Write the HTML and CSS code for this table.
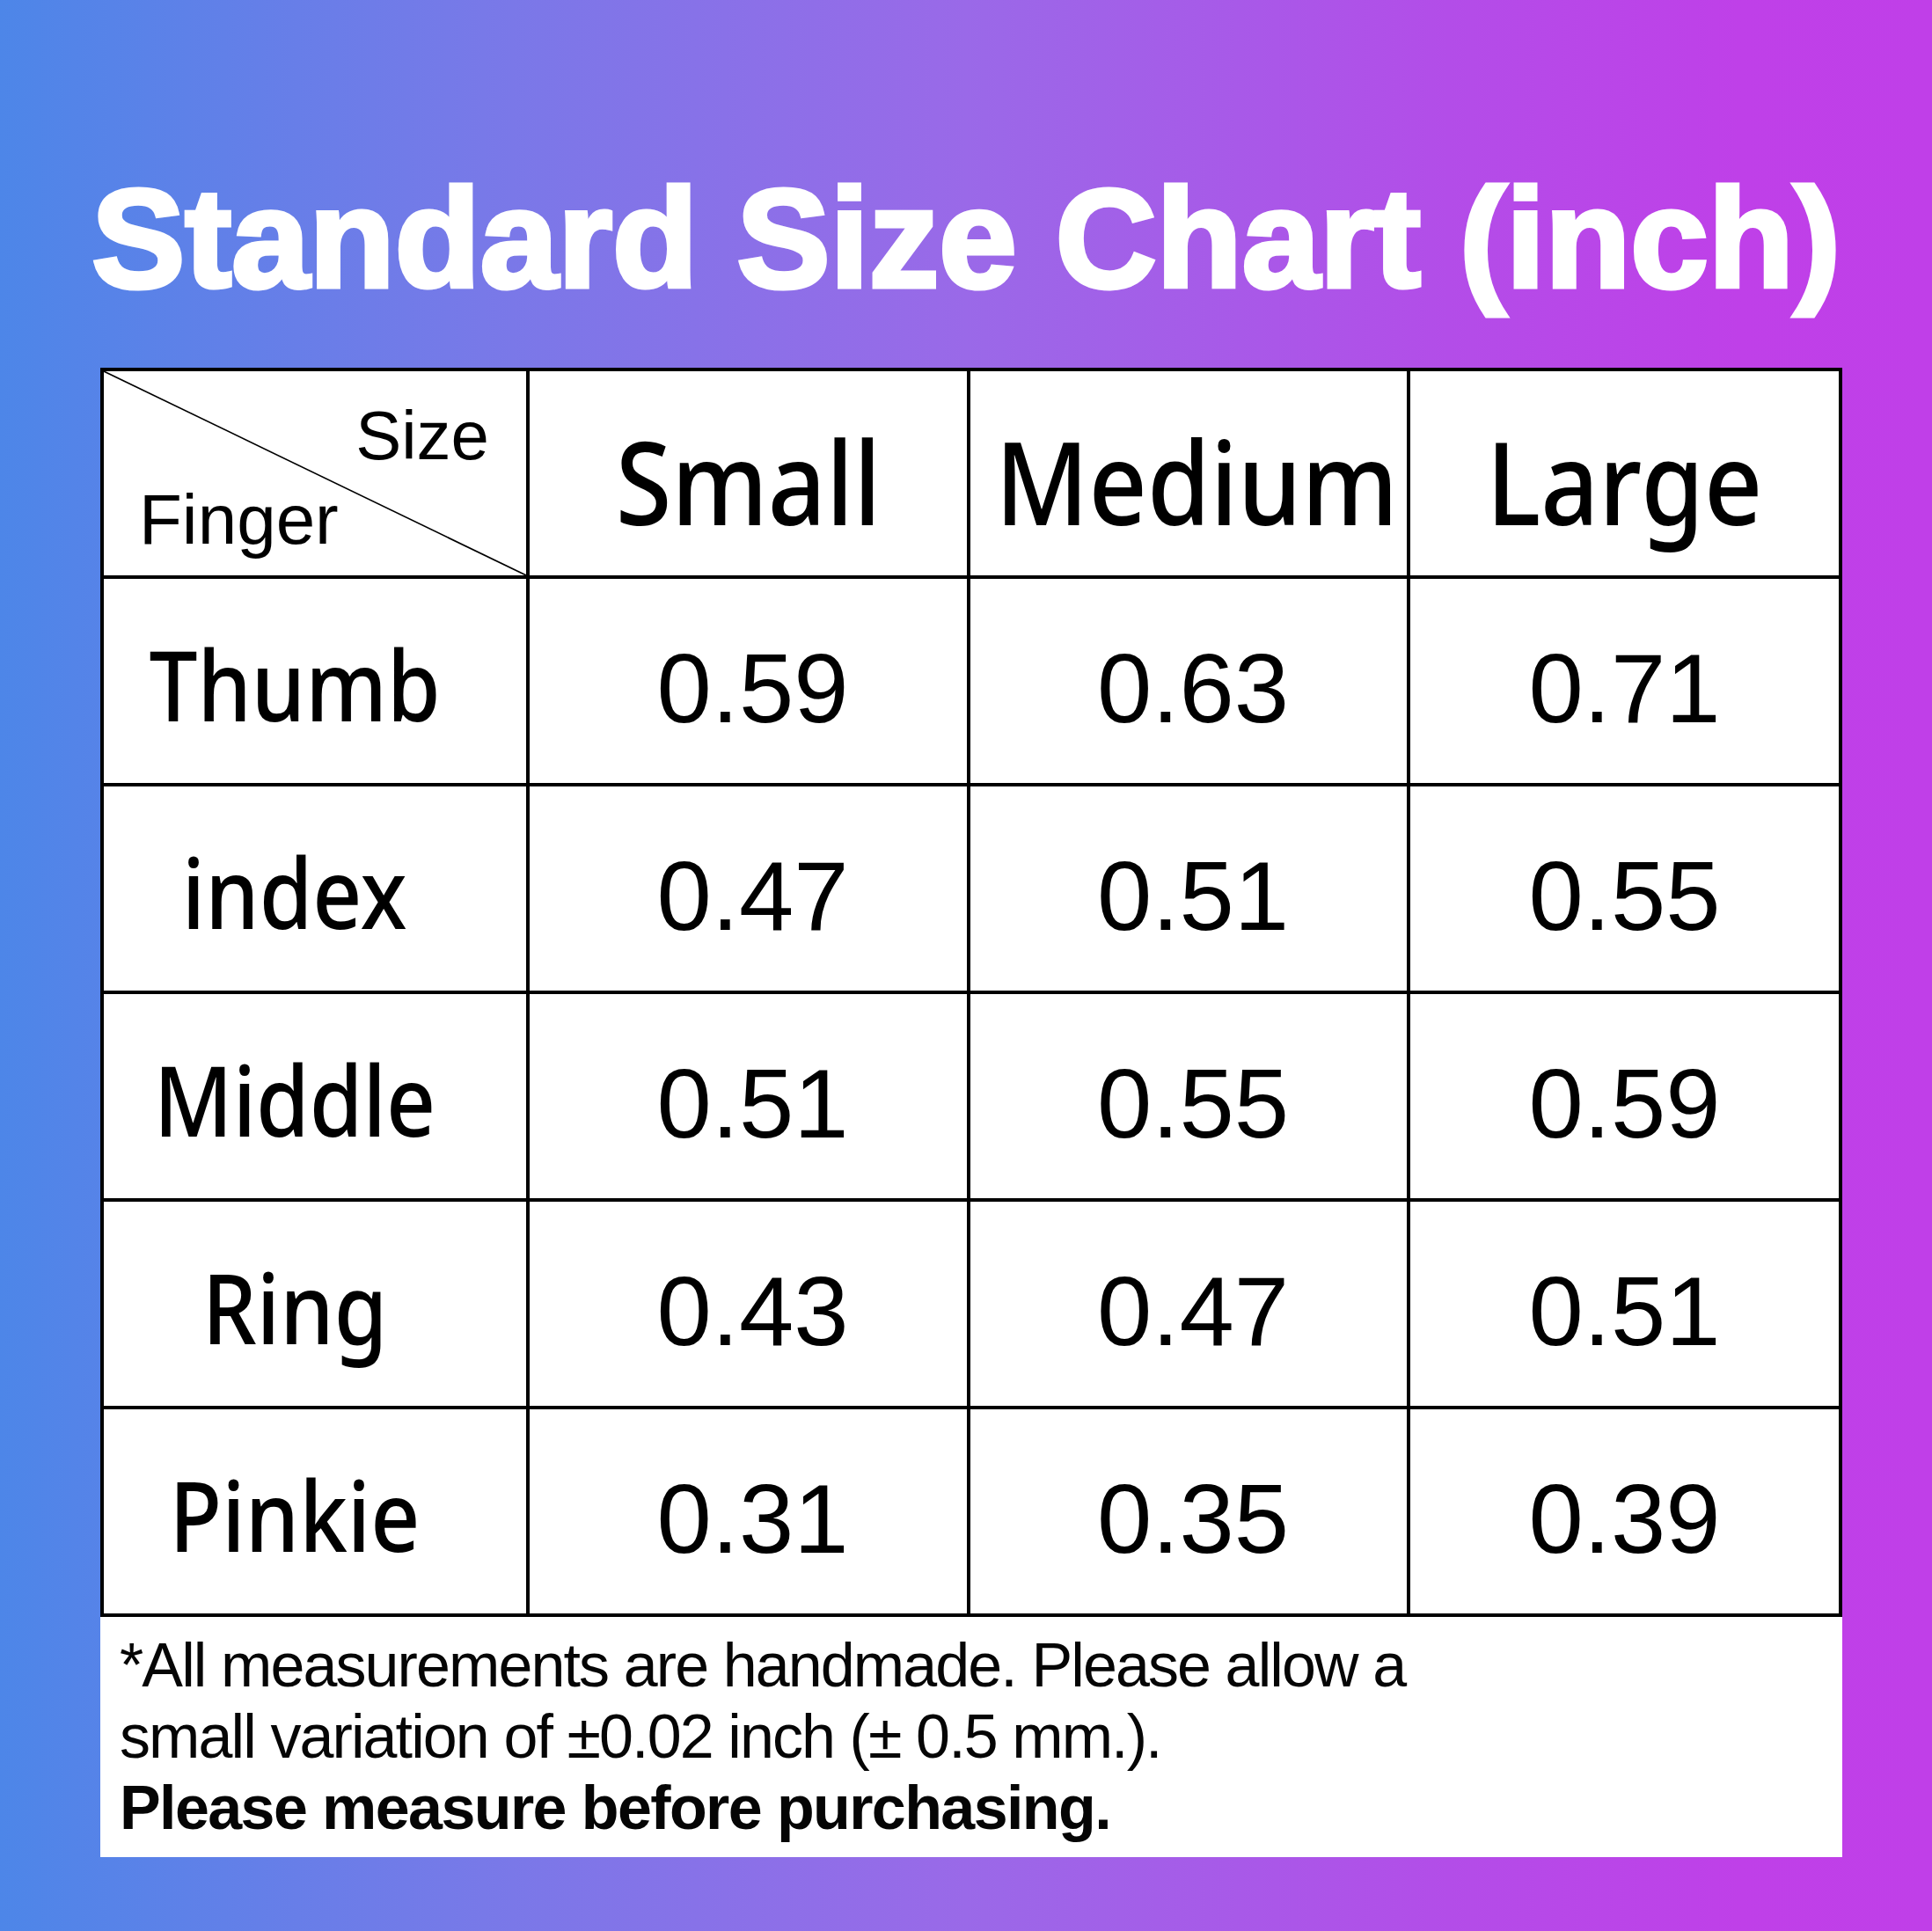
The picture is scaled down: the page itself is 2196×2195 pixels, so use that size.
FILE: index.html
```html
<!DOCTYPE html>
<html lang="en">
<head>
<meta charset="utf-8">
<title>Standard Size Chart (inch)</title>
<link rel="stylesheet" href="styles.css">
</head>
<body>
<div class="page">
  <h1 class="title">Standard Size Chart (inch)</h1>
  <table class="chart">
    <colgroup>
      <col class="col-finger">
      <col class="col-small">
      <col class="col-medium">
      <col class="col-large">
    </colgroup>
    <thead>
      <tr class="head-row">
        <th class="corner">
          <svg class="diag" viewBox="0 0 100 100" preserveAspectRatio="none"><line x1="0" y1="0" x2="100" y2="100" stroke="#000" stroke-width="1.6" vector-effect="non-scaling-stroke"/></svg>
          <div class="corner-inner">
            <span class="corner-size">Size</span>
            <span class="corner-finger">Finger</span>
          </div>
        </th>
        <th class="size-head"><span class="fit">Small</span></th>
        <th class="size-head"><span class="fit">Medium</span></th>
        <th class="size-head"><span class="fit">Large</span></th>
      </tr>
    </thead>
    <tbody>
      <tr><th class="finger"><span class="fit">Thumb</span></th><td class="num">0.59</td><td class="num">0.63</td><td class="num num-last">0.71</td></tr>
      <tr><th class="finger"><span class="fit">index</span></th><td class="num">0.47</td><td class="num">0.51</td><td class="num num-last">0.55</td></tr>
      <tr><th class="finger"><span class="fit">Middle</span></th><td class="num">0.51</td><td class="num">0.55</td><td class="num num-last">0.59</td></tr>
      <tr><th class="finger"><span class="fit">Ring</span></th><td class="num">0.43</td><td class="num">0.47</td><td class="num num-last">0.51</td></tr>
      <tr><th class="finger"><span class="fit">Pinkie</span></th><td class="num">0.31</td><td class="num">0.35</td><td class="num num-last">0.39</td></tr>
    </tbody>
  </table>
  <div class="note">
    <p>*All measurements are handmade. Please allow a</p>
    <p>small variation of ±0.02 inch (± 0.5 mm.).</p>
    <p class="note-strong">Please measure before purchasing.</p>
  </div>
</div>
</body>
</html>
```
FILE: styles.css
```css
html, body {
  margin: 0;
  padding: 0;
}

body {
  width: 2196px;
  min-height: 2195px;
  background: linear-gradient(90deg, #4d86e8 0%, #7879e8 25%, #9a69e8 50%, #b34de8 75%, #bf40e8 90%, #c03fe8 100%);
  font-family: "Liberation Sans", Arial, sans-serif;
}

.page {
  display: flex;
  flex-direction: column;
  align-items: flex-start;
}

.title {
  margin: 0;
  padding-top: 192px;
  width: 100%;
  height: 159px;
  box-sizing: content-box;
  font: 700 159px/159px "Liberation Sans", Arial, sans-serif;
  letter-spacing: 0;
  color: #fff;
  -webkit-text-stroke: 5px #fff;
  text-align: center;
  white-space: nowrap;
}

.chart {
  margin: 67px 0 0 114px;
  width: 1980px;
  border-collapse: collapse;
  table-layout: fixed;
  background: #fff;
}

.col-finger { width: 484px; }
.col-small { width: 501px; }
.col-medium { width: 500px; }
.col-large { width: 491px; }

.chart tr {
  height: 236px;
}

.chart th,
.chart td {
  border: 4px solid #000;
  padding: 0;
  text-align: center;
  vertical-align: middle;
  color: #000;
}

.corner {
  position: relative;
  vertical-align: top !important;
}

.diag {
  position: absolute;
  left: 0;
  top: 0;
  width: 100%;
  height: 100%;
}

.corner-inner {
  display: flex;
  flex-direction: column;
  padding: 26px 42px 0 40px;
  font: 400 78px/95px "Liberation Sans", Arial, sans-serif;
}

.corner-size {
  align-self: flex-end;
}

.corner-finger {
  align-self: flex-start;
  font-size: 80px;
}

.fit {
  display: inline-block;
  transform: scaleX(0.89);
  white-space: nowrap;
}

.size-head {
  font: 500 130px/1 "Noto Sans", "Open Sans", sans-serif;
  padding-top: 18px !important;
}

.finger {
  font: 500 110px/1 "Noto Sans", "Open Sans", sans-serif;
  padding-right: 46px !important;
  padding-top: 6px !important;
}

.num {
  font: 400 112px/1 "Liberation Sans", Arial, sans-serif;
  padding-top: 18px !important;
  padding-left: 10px !important;
}

.num-last {
  padding-left: 0 !important;
}

.note {
  margin-left: 114px;
  width: 1980px;
  box-sizing: border-box;
  background: #fff;
  padding: 15px 0 15px 22px;
  font: 400 70px/81px "Liberation Sans", Arial, sans-serif;
  letter-spacing: -1.9px;
  color: #050505;
}

.note p {
  margin: 0;
  white-space: nowrap;
}

.note-strong {
  font-weight: 700;
  letter-spacing: -1.6px;
}
```
